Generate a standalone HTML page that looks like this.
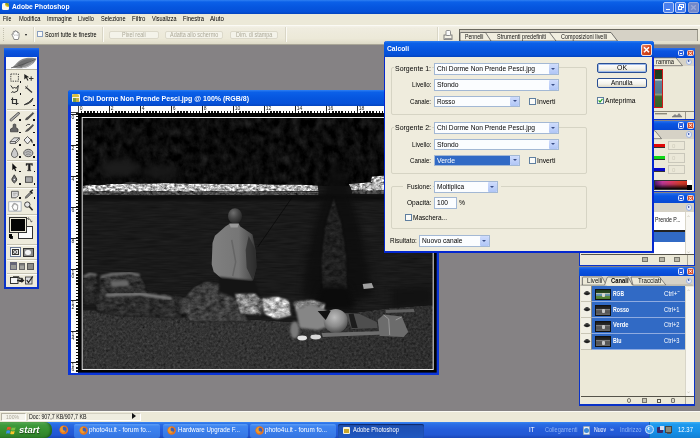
<!DOCTYPE html>
<html><head><meta charset="utf-8"><title>Adobe Photoshop</title>
<style>
*{box-sizing:border-box;margin:0;padding:0}
html,body{width:700px;height:438px;overflow:hidden;background:#858284;font-family:"Liberation Sans",sans-serif;font-size:6px;color:#000}
.a{position:absolute}
.t{position:absolute;white-space:nowrap;transform-origin:0 50%}
.xb{background:linear-gradient(#2f80f2 0%,#0b60e8 14%,#0656df 50%,#0550d8 85%,#0443bd 100%)}
.pb{background:linear-gradient(#2870ee 0%,#0a55e0 30%,#0648d4 100%)}
.dd{position:absolute;background:#fbfdff;border:1px solid #a3b8d4}
.ddb{position:absolute;right:0;top:0;bottom:0;width:9px;background:linear-gradient(#cfdcfc,#b0c6f6);border-radius:1px}
.ddb:after{content:"";position:absolute;left:2.5px;top:3.5px;border-left:2px solid transparent;border-right:2px solid transparent;border-top:2.5px solid #3a4f87}
.gb{position:absolute;border:1px solid #d6d4c4;border-radius:2px}
.cb{position:absolute;background:#fbfbf8;border:1px solid #5f7fa0}
.btn{position:absolute;border:1px solid #2a4f94;border-radius:2px;background:linear-gradient(#fff,#f3f2ea 60%,#dcd8c8)}
</style></head><body><div id="w" style="position:absolute;left:0;top:0;width:700px;height:438px;will-change:transform">
<div class="a xb" style="left:0;top:0;width:700px;height:14px"></div>
<div class="a" style="left:1.8px;top:3.2px;width:7.6px;height:6.6px;background:#fbf9ee;border-radius:1.5px"></div>
<div class="a" style="left:5px;top:2.8px;width:4.4px;height:4.6px;background:linear-gradient(215deg,#3a5a20 0,#8a9a20 35%,#e8c820 70%,#f4e8b0 100%);border-radius:1px 2px 1px 3px"></div>
<div class="t" style="left:12.20px;top:3.20px;font-size:7.8px;line-height:7.8px;color:#fff;transform:scaleX(0.856);font-weight:bold;">Adobe Photoshop</div>
<div class="a" style="left:662.5px;top:1.5px;width:11px;height:11px;background:#4a80ee;border:1px solid #b9cdf8;border-radius:2px"></div>
<div class="a" style="left:675px;top:1.5px;width:11px;height:11px;background:#4a80ee;border:1px solid #b9cdf8;border-radius:2px"></div>
<div class="a" style="left:688px;top:1.5px;width:11px;height:11px;background:#7289cc;border:1px solid #93a5d8;border-radius:2px"></div>
<div class="a" style="left:665.5px;top:8.5px;width:4px;height:1.6px;background:#fff;"></div>
<div class="a" style="left:679px;top:4px;width:4.5px;height:4px;border:1px solid #fff;border-top-width:1.5px"></div>
<div class="a" style="left:677.5px;top:6px;width:4.5px;height:4px;background:#4a80ee;border:1px solid #fff;border-top-width:1.5px"></div>
<svg class="a" style="left:688px;top:1.5px" width="11" height="11"><path d="M3.2 3.2L7.8 7.8M7.8 3.2L3.2 7.8" stroke="#9aa8d6" stroke-width="1.4"/></svg>
<div class="a" style="left:0px;top:14px;width:700px;height:11px;background:#ece9d8;"></div>
<div class="t" style="left:2.70px;top:15.30px;font-size:7px;line-height:7px;color:#000;transform:scaleX(0.736);">File</div>
<div class="t" style="left:18.50px;top:15.30px;font-size:7px;line-height:7px;color:#000;transform:scaleX(0.825);">Modifica</div>
<div class="t" style="left:46.50px;top:15.30px;font-size:7px;line-height:7px;color:#000;transform:scaleX(0.813);">Immagine</div>
<div class="t" style="left:78.00px;top:15.30px;font-size:7px;line-height:7px;color:#000;transform:scaleX(0.806);">Livello</div>
<div class="t" style="left:100.50px;top:15.30px;font-size:7px;line-height:7px;color:#000;transform:scaleX(0.797);">Selezione</div>
<div class="t" style="left:131.50px;top:15.30px;font-size:7px;line-height:7px;color:#000;transform:scaleX(0.868);">Filtro</div>
<div class="t" style="left:151.50px;top:15.30px;font-size:7px;line-height:7px;color:#000;transform:scaleX(0.781);">Visualizza</div>
<div class="t" style="left:182.50px;top:15.30px;font-size:7px;line-height:7px;color:#000;transform:scaleX(0.830);">Finestra</div>
<div class="t" style="left:210.00px;top:15.30px;font-size:7px;line-height:7px;color:#000;transform:scaleX(0.877);">Aiuto</div>
<div class="a" style="left:0px;top:25px;width:700px;height:19.5px;background:linear-gradient(#f4f2e8 0,#efecdf 12%,#ece9d8 70%,#dedac8 100%);border-top:1px solid #fbfaf5;border-bottom:0.500px solid #a8a596"></div>
<div class="a" style="left:3px;top:28px;width:1px;height:13px;border-left:1px dotted #c2bfae"></div>
<svg class="a" style="left:10px;top:29.500px" width="12" height="10.500" viewBox="0 0 12 10.500"><path d="M2.400 5.600C1.300 3.900 2.100 3.300 3.200 4.500V2.200c0-1.100 1.300-1.100 1.400 0V1.400c.2-1.100 1.500-1 1.500.1V1.900c.2-1 1.500-.9 1.500.2v1c.3-.9 1.500-.7 1.400.4C9 5.700 9.300 7.400 8.200 9.500H4.100C3.700 8.200 3 6.800 2.400 5.600Z" fill="#fff" stroke="#7c7c7c" stroke-width=".9"/><path d="M4.600 4.500V6M6.100 4.200V6M7.600 4.500V6" stroke="#b5b5b5" stroke-width=".7"/></svg>
<div class="a" style="left:25.4px;top:33.6px;width:0px;height:0px;border-left:1.9px solid transparent;border-right:1.9px solid transparent;border-top:2.3px solid #111"></div>
<div class="a" style="left:33px;top:27px;width:1px;height:15px;background:#d9d6c6;border-right:1px solid #fbfaf4;width:2px"></div>
<div class="a" style="left:37px;top:31px;width:5.9px;height:6.1px;background:#fbfbf8;border:0.800px solid #8a9fc0"></div>
<div class="t" style="left:44.60px;top:30.70px;font-size:7px;line-height:7px;color:#000;transform:scaleX(0.779);">Scorri tutte le finestre</div>
<div class="a" style="left:102px;top:27px;width:2px;height:15px;background:#d9d6c6;border-right:1px solid #fbfaf4"></div>
<div class="a" style="left:109px;top:31px;width:49.5px;height:7.5px;background:#f4f3ea;border:1px solid #dcd9ca;border-radius:2px"></div>
<div class="t" style="left:121.92px;top:31.30px;font-size:7px;line-height:7px;color:#aca998;transform:scaleX(0.780);">Pixel reali</div>
<div class="a" style="left:165px;top:31px;width:58px;height:7.5px;background:#f4f3ea;border:1px solid #dcd9ca;border-radius:2px"></div>
<div class="t" style="left:169.87px;top:31.30px;font-size:7px;line-height:7px;color:#aca998;transform:scaleX(0.780);">Adatta allo schermo</div>
<div class="a" style="left:230px;top:31px;width:48px;height:7.5px;background:#f4f3ea;border:1px solid #dcd9ca;border-radius:2px"></div>
<div class="t" style="left:235.79px;top:31.30px;font-size:7px;line-height:7px;color:#aca998;transform:scaleX(0.780);">Dim. di stampa</div>
<div class="a" style="left:285px;top:27px;width:2px;height:15px;background:#d9d6c6;border-right:1px solid #fbfaf4"></div>
<div class="a" style="left:437px;top:27px;width:2px;height:15px;background:#d9d6c6;border-right:1px solid #fbfaf4"></div>
<svg class="a" style="left:443px;top:29px" width="11" height="12" viewBox="0 0 11 12"><rect x="1" y="6" width="8" height="4.500" fill="#f4f2e6" stroke="#666" stroke-width=".8"/><rect x="3" y="1.500" width="4.500" height="5" rx="1" fill="#fafafa" stroke="#777" stroke-width=".8"/><rect x="1.500" y="9" width="7.500" height="1.500" fill="#999"/></svg>
<div class="a" style="left:459px;top:28.5px;width:238.5px;height:12.5px;background:#d6d2c6;border:1px solid #6b695f;border-right-color:#9a978a;border-bottom:none"></div>
<svg class="a" style="left:459px;top:28px" width="240" height="14" viewBox="0 0 240 14">
<path d="M90 4.500H152L158.500 13H90Z" fill="#f1eee0" stroke="#444" stroke-width=".7"/>
<path d="M24 4.500H90.500L97 13H24Z" fill="#f1eee0" stroke="#444" stroke-width=".7"/>
<path d="M1 13V5.500Q1 4.500 2 4.500H26.500L32 13Z" fill="#f1eee0" stroke="#444" stroke-width=".7"/>
</svg>
<div class="t" style="left:464.50px;top:34.05px;font-size:6.5px;line-height:6.5px;color:#111;transform:scaleX(0.800);">Pennelli</div>
<div class="t" style="left:497.00px;top:34.05px;font-size:6.5px;line-height:6.5px;color:#111;transform:scaleX(0.848);">Strumenti predefiniti</div>
<div class="t" style="left:561.00px;top:34.05px;font-size:6.5px;line-height:6.5px;color:#111;transform:scaleX(0.838);">Composizioni livelli</div>
<div class="a" style="left:3.9px;top:48px;width:35.6px;height:241.3px;background:#eeebdc;border:1px solid #0a32c8;border-width:1px 2.1px 2px 2.1px"></div>
<div class="a pb" style="left:3.900px;top:48px;width:35.600px;height:9.400px"></div>
<div class="a" style="left:6px;top:57.4px;width:31.4px;height:12.6px;background:#fbfbfb;border-bottom:1px solid #b5b2a2"></div>
<svg class="a" style="left:5px;top:57px" width="33" height="13" viewBox="5 57 33 13">
<defs><filter id="fb" color-interpolation-filters="sRGB" x="-10%" y="-20%" width="120%" height="140%"><feGaussianBlur stdDeviation=".6"/></filter></defs>
<g filter="url(#fb)">
<path d="M12 67.500C15 66 17 61 22.500 59C27 57.500 33 57.500 36.500 58.800C35 61.500 33 65 27 67.200C22 68.800 16 68.500 12 67.500Z" fill="#8a8a8a"/>
<path d="M17 65C20 60.500 26 58.800 33 59.500C29 61 24 64.500 21.500 67.500Z" fill="#6e6e6e"/>
<path d="M11 67.800C17 66.500 25 64 35.500 59.200" stroke="#4a4a4a" stroke-width=".7" fill="none"/>
<path d="M22 67.800C26 67.500 30 65.500 32.500 63" stroke="#bdbdbd" stroke-width="1" fill="none"/>
</g></svg>
<div class="a" style="left:7px;top:108.5px;width:30px;height:1px;background:#c5c2b2;border-bottom:1px solid #fbfaf5;height:2px"></div>
<div class="a" style="left:7px;top:159.5px;width:30px;height:1px;background:#c5c2b2;border-bottom:1px solid #fbfaf5;height:2px"></div>
<div class="a" style="left:7px;top:186.5px;width:30px;height:1px;background:#c5c2b2;border-bottom:1px solid #fbfaf5;height:2px"></div>
<div class="a" style="left:7px;top:213.5px;width:30px;height:1px;background:#c5c2b2;border-bottom:1px solid #fbfaf5;height:2px"></div>
<div class="a" style="left:7px;top:243.5px;width:30px;height:1px;background:#c5c2b2;border-bottom:1px solid #fbfaf5;height:2px"></div>
<div class="a" style="left:7px;top:259px;width:30px;height:1px;background:#c5c2b2;border-bottom:1px solid #fbfaf5;height:2px"></div>
<div class="a" style="left:7px;top:272.5px;width:30px;height:1px;background:#c5c2b2;border-bottom:1px solid #fbfaf5;height:2px"></div>
<div class="a" style="left:68px;top:89.5px;width:371.3px;height:285.2px;background:#0a35d8;border-radius:3px 3px 0 0"></div>
<div class="a xb" style="left:68px;top:89.500px;width:371.300px;height:16px;border-radius:3px 3px 0 0"></div>
<div class="a" style="left:71.5px;top:94px;width:8px;height:8px;background:#f7f5e0;border-radius:1px"></div>
<div class="a" style="left:72px;top:94px;width:7px;height:2.5px;background:#d8c040;border-radius:2px 2px 0 0"></div>
<div class="a" style="left:75.5px;top:97.5px;width:3.5px;height:4px;background:#c8b040;"></div>
<div class="a" style="left:73px;top:98px;width:2.5px;height:3.5px;background:#7aa040;"></div>
<div class="t" style="left:82.50px;top:94.65px;font-size:7.5px;line-height:7.5px;color:#fff;transform:scaleX(0.934);font-weight:bold;">Chi Dorme Non Prende Pesci.jpg @ 100% (RGB/8)</div>
<div class="a" style="left:70.9px;top:105.5px;width:366.4px;height:7.5px;background:#fdfdfd;"></div>
<div class="a" style="left:70.9px;top:105.5px;width:7.4px;height:267px;background:#fdfdfd;"></div>
<div class="a" style="left:78.3px;top:110.5px;width:359px;height:2.5px;background:repeating-linear-gradient(90deg,#111 0,#111 1.4px,transparent 1.4px,transparent 3.1px)"></div>
<div class="a" style="left:75.8px;top:113px;width:2.5px;height:259.5px;background:repeating-linear-gradient(180deg,#111 0,#111 1.4px,transparent 1.4px,transparent 3.1px)"></div>
<div class="a" style="left:78.2px;top:106px;width:1px;height:6.5px;background:#222;"></div>
<div class="t" style="left:79.70px;top:106.20px;font-size:5px;line-height:5px;color:#222;">0</div>
<div class="a" style="left:109.2px;top:106px;width:1px;height:6.5px;background:#222;"></div>
<div class="t" style="left:110.70px;top:106.20px;font-size:5px;line-height:5px;color:#222;">2</div>
<div class="a" style="left:140.2px;top:106px;width:1px;height:6.5px;background:#222;"></div>
<div class="t" style="left:141.70px;top:106.20px;font-size:5px;line-height:5px;color:#222;">4</div>
<div class="a" style="left:171.2px;top:106px;width:1px;height:6.5px;background:#222;"></div>
<div class="t" style="left:172.70px;top:106.20px;font-size:5px;line-height:5px;color:#222;">6</div>
<div class="a" style="left:202.2px;top:106px;width:1px;height:6.5px;background:#222;"></div>
<div class="t" style="left:203.70px;top:106.20px;font-size:5px;line-height:5px;color:#222;">8</div>
<div class="a" style="left:233.2px;top:106px;width:1px;height:6.5px;background:#222;"></div>
<div class="t" style="left:234.70px;top:106.20px;font-size:5px;line-height:5px;color:#222;">10</div>
<div class="a" style="left:264.2px;top:106px;width:1px;height:6.5px;background:#222;"></div>
<div class="t" style="left:265.70px;top:106.20px;font-size:5px;line-height:5px;color:#222;">12</div>
<div class="a" style="left:295.2px;top:106px;width:1px;height:6.5px;background:#222;"></div>
<div class="t" style="left:296.70px;top:106.20px;font-size:5px;line-height:5px;color:#222;">14</div>
<div class="a" style="left:326.2px;top:106px;width:1px;height:6.5px;background:#222;"></div>
<div class="t" style="left:327.70px;top:106.20px;font-size:5px;line-height:5px;color:#222;">16</div>
<div class="a" style="left:357.2px;top:106px;width:1px;height:6.5px;background:#222;"></div>
<div class="t" style="left:358.70px;top:106.20px;font-size:5px;line-height:5px;color:#222;">18</div>
<div class="a" style="left:71px;top:113.5px;width:7px;height:1px;background:#222;"></div>
<div class="t" style="left:71.50px;top:114.70px;font-size:5px;line-height:5px;color:#222;">0</div>
<div class="a" style="left:71px;top:144.5px;width:7px;height:1px;background:#222;"></div>
<div class="t" style="left:71.50px;top:145.70px;font-size:5px;line-height:5px;color:#222;">2</div>
<div class="a" style="left:71px;top:175.5px;width:7px;height:1px;background:#222;"></div>
<div class="t" style="left:71.50px;top:176.70px;font-size:5px;line-height:5px;color:#222;">4</div>
<div class="a" style="left:71px;top:206.5px;width:7px;height:1px;background:#222;"></div>
<div class="t" style="left:71.50px;top:207.70px;font-size:5px;line-height:5px;color:#222;">6</div>
<div class="a" style="left:71px;top:237.5px;width:7px;height:1px;background:#222;"></div>
<div class="t" style="left:71.50px;top:238.70px;font-size:5px;line-height:5px;color:#222;">8</div>
<div class="a" style="left:71px;top:268.5px;width:7px;height:1px;background:#222;"></div>
<div class="t" style="left:71.50px;top:269.70px;font-size:5px;line-height:5px;color:#222;">1</div>
<div class="t" style="left:71.50px;top:273.90px;font-size:5px;line-height:5px;color:#222;">0</div>
<div class="a" style="left:71px;top:299.5px;width:7px;height:1px;background:#222;"></div>
<div class="t" style="left:71.50px;top:300.70px;font-size:5px;line-height:5px;color:#222;">1</div>
<div class="t" style="left:71.50px;top:304.90px;font-size:5px;line-height:5px;color:#222;">2</div>
<div class="a" style="left:71px;top:330.5px;width:7px;height:1px;background:#222;"></div>
<div class="t" style="left:71.50px;top:331.70px;font-size:5px;line-height:5px;color:#222;">1</div>
<div class="t" style="left:71.50px;top:335.90px;font-size:5px;line-height:5px;color:#222;">4</div>
<div class="a" style="left:71px;top:361.5px;width:7px;height:1px;background:#222;"></div>
<div class="t" style="left:71.50px;top:362.70px;font-size:5px;line-height:5px;color:#222;">1</div>
<div class="t" style="left:71.50px;top:366.90px;font-size:5px;line-height:5px;color:#222;">6</div>
<div class="a" style="left:70.9px;top:112.3px;width:7.4px;height:0.8px;background:#444;"></div>
<div class="a" style="left:77.6px;top:105.5px;width:0.8px;height:7.5px;background:#444;"></div>
<svg class="a" style="left:78.300px;top:113px" width="358.700" height="259.600" viewBox="78.300 113 358.700 259.600">
<defs>
<filter id="gr" x="0" y="0" width="100%" height="100%" color-interpolation-filters="sRGB">
 <feTurbulence type="fractalNoise" baseFrequency="0.42" numOctaves="3" seed="7" result="n"/>
 <feColorMatrix in="n" type="matrix" values=".34 .33 .33 0 0 .34 .33 .33 0 0 .34 .33 .33 0 0 0 0 0 0 1" result="g"/>
 <feComposite in="SourceGraphic" in2="g" operator="arithmetic" k1="1.800" k2="0.100" k3="0" k4="0" result="m"/>
 <feComposite in="m" in2="SourceGraphic" operator="in"/>
</filter>
<filter id="gw" x="0" y="0" width="100%" height="100%" color-interpolation-filters="sRGB">
 <feTurbulence type="fractalNoise" baseFrequency="0.05 0.55" numOctaves="2" seed="5" result="n"/>
 <feColorMatrix in="n" type="matrix" values=".34 .33 .33 0 0 .34 .33 .33 0 0 .34 .33 .33 0 0 0 0 0 0 1" result="g"/>
 <feComposite in="SourceGraphic" in2="g" operator="arithmetic" k1="1.200" k2="0.400" k3="0" k4="0" result="m"/>
 <feComposite in="m" in2="SourceGraphic" operator="in"/>
</filter>
<filter id="tr" x="0" y="0" width="100%" height="100%" color-interpolation-filters="sRGB">
 <feTurbulence type="fractalNoise" baseFrequency="0.13 0.11" numOctaves="4" seed="23" result="n"/>
 <feColorMatrix in="n" type="matrix" values=".34 .33 .33 0 0 .34 .33 .33 0 0 .34 .33 .33 0 0 0 0 0 0 1" result="g"/>
 <feComposite in="SourceGraphic" in2="g" operator="arithmetic" k1="0" k2="1" k3="0.340" k4="-0.165" result="m"/>
 <feComposite in="m" in2="SourceGraphic" operator="in"/>
</filter>
<filter id="gr2" x="-5%" y="-5%" width="110%" height="110%" color-interpolation-filters="sRGB">
 <feTurbulence type="fractalNoise" baseFrequency="0.16 0.22" numOctaves="3" seed="11" result="n"/>
 <feColorMatrix in="n" type="matrix" values=".34 .33 .33 0 0 .34 .33 .33 0 0 .34 .33 .33 0 0 0 0 0 0 1" result="g"/>
 <feGaussianBlur in="SourceGraphic" stdDeviation="1.100" result="b"/>
 <feComposite in="b" in2="g" operator="arithmetic" k1="2.600" k2="-0.300" k3="0" k4="0" result="m"/>
 <feComposite in="m" in2="b" operator="in"/>
</filter>
<filter id="bd" x="0" y="-20%" width="100%" height="140%" color-interpolation-filters="sRGB">
 <feTurbulence type="fractalNoise" baseFrequency="0.28 0.45" numOctaves="3" seed="3" result="n"/>
 <feColorMatrix in="n" type="matrix" values=".34 .33 .33 0 0 .34 .33 .33 0 0 .34 .33 .33 0 0 0 0 0 0 1" result="g"/>
 <feGaussianBlur in="SourceGraphic" stdDeviation="0.600" result="b"/>
 <feComposite in="b" in2="g" operator="arithmetic" k1="3.200" k2="-0.650" k3="0" k4="0" result="m"/>
 <feComposite in="m" in2="b" operator="in"/>
</filter>
<filter id="bl" color-interpolation-filters="sRGB" x="-10%" y="-10%" width="120%" height="120%"><feGaussianBlur stdDeviation="0.700"/></filter>
<filter id="bl1" color-interpolation-filters="sRGB" x="-20%" y="-20%" width="140%" height="140%"><feGaussianBlur stdDeviation="1.300"/></filter>
<filter id="bl2" color-interpolation-filters="sRGB" x="-30%" y="-30%" width="160%" height="160%"><feGaussianBlur stdDeviation="3"/></filter>
<linearGradient id="shirt" x1="0" y1="0" x2="1" y2="0"><stop offset="0" stop-color="#808080"/><stop offset=".6" stop-color="#767676"/><stop offset=".85" stop-color="#545454"/><stop offset="1" stop-color="#2c2c2c"/></linearGradient>
<radialGradient id="hip" cx=".45" cy=".35" r=".7"><stop offset="0" stop-color="#bcbcbc"/><stop offset=".55" stop-color="#8a8a8a"/><stop offset="1" stop-color="#404040"/></radialGradient>
<radialGradient id="head" cx=".38" cy=".3" r=".75"><stop offset="0" stop-color="#6e6e6e"/><stop offset=".5" stop-color="#444"/><stop offset="1" stop-color="#222"/></radialGradient>
<linearGradient id="grs" gradientUnits="userSpaceOnUse" x1="83" y1="0" x2="434" y2="0"><stop offset="0" stop-color="#333"/><stop offset=".45" stop-color="#343434"/><stop offset=".75" stop-color="#303030"/><stop offset="1" stop-color="#2e2e2e"/></linearGradient>
<clipPath id="pc"><rect x="83" y="118" width="350.300" height="251.300"/></clipPath>
</defs>
<rect x="78.300" y="113" width="358.700" height="259.600" fill="#020202"/>
<g clip-path="url(#pc)">
 <!-- trees -->
 <rect x="83" y="118" width="351" height="68" fill="#0a0a0a" filter="url(#tr)"/>
 <g filter="url(#bl2)">
  <ellipse cx="120" cy="168" rx="20" ry="9" fill="#1c1c1c"/>
  <ellipse cx="160" cy="172" rx="18" ry="7" fill="#181818"/>
  <ellipse cx="410" cy="140" rx="28" ry="20" fill="#202020"/>
 </g>
 <path d="M122 184Q131 179.500 141 184Z" fill="#333" filter="url(#bl)"/>
 <!-- water -->
 <rect x="83" y="186" width="351" height="140" fill="#1a1a1a" filter="url(#gw)"/>
 <rect x="83" y="194.500" width="351" height="6" fill="#0a0a0a" opacity=".75" filter="url(#bl1)"/>
 <!-- stone band -->
 <g filter="url(#bd)">
  <path d="M83 186L90 184.500L100 185L112 184L124 184L140 183.500L148 183.500L165 183L185 183.500L205 183.500L228 184L250 184L275 184.500L300 184.500L318 185.500L319 191L300 191.500L270 191.500L240 192L215 191.500L185 192L160 191.500L130 192L105 191.500L83 192Z" fill="#c2c2c2"/>
  <path d="M349 184L360 183L371 182L372 176.500L382 175.500L400 175L434 173V189L400 190L370 191L352 190.500Z" fill="#bebebe"/>
 </g>
 <g filter="url(#bd)" opacity=".8">
  <path d="M83 191.500H319V195L250 195.500L200 195L150 195.500L83 195Z" fill="#5a5a5a"/>
  <path d="M352 190.500H434V194H352Z" fill="#555"/>
 </g>
 <!-- bush -->
 <path d="M335 156L343 172L350 192L357 215L364 245L370 275L372 296L345 304L320 304L302 296L305 270L311 240L318 214L324 192L329 172Z" fill="#0d0d0d" opacity=".8" filter="url(#bl2)"/>
 <g filter="url(#gr2)" opacity=".75">
  <path d="M334 196L342 222L347 255L348 290L322 290L321 258L325 225Z" fill="#262626"/>
 </g>
 <path d="M322 286L348 286L356 310L314 310Z" fill="#0b0b0b" filter="url(#bl2)"/>
 <path d="M392 288L432 287V306L392 308Z" fill="#121212" filter="url(#bl2)"/>
 <path d="M363 284L372 283L374 288L364 289Z" fill="#a0a0a0" filter="url(#bl)"/>
 <!-- fishing rod -->
 <path d="M258 247L292 198" stroke="#070707" stroke-width=".9" fill="none" opacity=".8"/>
 <!-- grass -->
 <path d="M83 310L130 311L185 314L230 318L290 322L330 318L360 312L390 308L434 305V370H83Z" fill="url(#grs)" filter="url(#gr)"/>
 <path d="M386 310L414 309L415 312L386 313Z" fill="#606060" filter="url(#bl)"/>
 <!-- rocks left -->
 <g filter="url(#gr2)">
  <path d="M83 277L90 273L97 274L99 290L98 304L83 306Z" fill="#2a2a2a"/>
  <path d="M99 277L112 273L130 272L140 274L146 284L147 293L100 293Z" fill="#313131"/>
  <path d="M96 293L150 291L182 296L196 300L210 314L180 318L120 316L96 312Z" fill="#2d2d2d"/>
  <path d="M181 302L192 288L205 281L220 282L232 290L240 302L250 322L190 322Z" fill="#3e3e3e"/>
 </g>
 <path d="M84 277L90 274L97 275M101 277L112 274L130 273L140 275" stroke="#858585" stroke-width="2.200" fill="none" filter="url(#bl1)"/>
 <path d="M106 295L140 294L172 298.500" stroke="#8a8a8a" stroke-width="2.600" fill="none" filter="url(#bl1)"/>
 <path d="M110 281L128 280L130 286L112 287Z" fill="#686868" filter="url(#bl1)"/>
 <!-- man -->
 <ellipse cx="235.300" cy="216" rx="7" ry="7.800" fill="url(#head)" filter="url(#bl)"/>
 <path d="M229.600 224L239.200 224L240.400 226.200L252.800 234.600L256 250L257 267L253.500 280L252.400 281.300L222.400 279L214 271.700L212 264.500L212.800 243L215.200 235.800L226 226.200Z" fill="url(#shirt)" filter="url(#bl)"/>
 <path d="M229.600 223.500L239.200 223.500L238 227.500L231 227.500Z" fill="#9a9a9a" filter="url(#bl)"/>
 <path d="M249 236L255 248L257 267L253 280L247 268L246 250Z" fill="#2a2a2a" opacity=".7" filter="url(#bl)"/>
 <path d="M232 240L236 262L233 276" stroke="#5a5a5a" stroke-width="1.500" fill="none" opacity=".6" filter="url(#bl)"/>
 <path d="M219 277L255 281L261 296L240 300L219 292Z" fill="#141414" filter="url(#bl1)"/>
 <!-- light rocks near woman -->
 <g filter="url(#gr2)">
  <path d="M262 298L278 296L290 300L292 316L276 320L264 314Z" fill="#b4b4b4"/>
  <path d="M292 301L312 299L326 303L325 311L296 312Z" fill="#7e7e7e"/>
  <path d="M234 293L256 293L262 300L262 316L240 314Z" fill="#8a8a8a"/>
 </g>
 <!-- woman -->
 <path d="M296 309L312 305L326 310L330 326L318 330L300 328Z" fill="#868686" filter="url(#bl1)"/>
 <path d="M345 313L360 314L377 322L378 328L352 329Z" fill="#4e4e4e" filter="url(#bl)"/>
 <circle cx="336" cy="321" r="12" fill="url(#hip)" filter="url(#bl)"/>
 <path d="M318 311L331 311L326 320Z" fill="#111" filter="url(#bl)"/>
 <path d="M349 314L354 314L358 328L352 328Z" fill="#1c1c1c" filter="url(#bl)"/>
 <ellipse cx="295" cy="330" rx="4.500" ry="8.500" fill="#7a7a7a" filter="url(#bl1)"/>
 <ellipse cx="302.500" cy="338" rx="4.800" ry="2.400" fill="#e2e2e2" filter="url(#bl)"/>
 <ellipse cx="316" cy="337" rx="5.300" ry="2.400" fill="#d8d8d8" filter="url(#bl)"/>
 <path d="M322 333L384 331L385 334.500L323 337Z" fill="#6e6e6e" filter="url(#bl)"/>
 <!-- bag -->
 <path d="M378 320L384 314.500L402 316.500L408.500 332L404 337L380 336Z" fill="#6c6c6c" filter="url(#bl)"/>
 <path d="M384 315L389 319L390 335M402 317L396 320" stroke="#999" stroke-width="1" fill="none" filter="url(#bl)"/>
</g>
<rect x="82.500" y="117.500" width="351" height="252" fill="none" stroke="#ececec" stroke-width="1"/>
</svg>

<div class="a" style="left:579px;top:48px;width:116px;height:72px;background:#ece9d8;border:1.500px solid #0a32c8"></div>
<div class="a pb" style="left:579px;top:48px;width:116px;height:9.500px"></div>
<div class="a" style="left:677.5px;top:49.8px;width:6.5px;height:6.5px;background:#2f62e0;border:1px solid #dfe7fb;border-radius:1.5px"></div>
<div class="a" style="left:679.5px;top:53.3px;width:2.5px;height:1.2px;background:#fff;"></div>
<div class="a" style="left:686.5px;top:49.8px;width:7px;height:6.5px;background:#d8502c;border:1px solid #f3d5c8;border-radius:1.5px"></div>
<svg class="a" style="left:686.5px;top:49.8px" width="7" height="6.500"><path d="M2.200 2L4.800 4.500M4.800 2L2.200 4.500" stroke="#fff" stroke-width="1"/></svg>
<div class="a" style="left:580.5px;top:57.5px;width:113px;height:8.5px;background:#d6d2c6;"></div>
<svg class="a" style="left:650px;top:57px" width="44" height="10" viewBox="650 57 44 10"><path d="M650 57.800H676L682.500 65.700H650Z" fill="#ece9d8" stroke="#444" stroke-width=".6"/></svg>
<div class="t" style="left:655.50px;top:58.55px;font-size:6.5px;line-height:6.5px;color:#111;transform:scaleX(0.890);">ramma</div>
<div class="a" style="left:685.5px;top:58.5px;width:6.5px;height:6.5px;background:#e8eefc;border-radius:3.2px;border:0.5px solid #9fb4e0"></div>
<div class="a" style="left:687.8px;top:60.1px;width:0px;height:0px;border-top:1.7px solid transparent;border-bottom:1.7px solid transparent;border-left:2.4px solid #1c3a9a"></div>
<div class="a" style="left:654px;top:69px;width:9px;height:39px;background:#5a7f8a;border:1px solid #d01818;background:linear-gradient(#1f3a1d 0%,#22401f 24%,#e8e8e8 26%,#5e8496 30%,#56788a 62%,#8a9a80 66%,#3e6a30 72%,#356028 100%)"></div>
<div class="a" style="left:654px;top:111px;width:39.5px;height:7.5px;background:#ece9d8;border-top:1px solid #8a8778"></div>
<div class="a" style="left:655px;top:113px;width:12px;height:2px;background:#c5c2b2;border-top:1px solid #8a8778"></div>
<svg class="a" style="left:671px;top:112px" width="12" height="6"><path d="M1 5L4 2.500L6 4L8 1.500L11 5Z" fill="#888" stroke="#555" stroke-width=".4"/></svg>
<div class="a" style="left:684.5px;top:111.5px;width:0.8px;height:7px;background:#9a978a;"></div>
<div class="a" style="left:579px;top:120.5px;width:116px;height:71.5px;background:#ece9d8;border:1.500px solid #0a32c8"></div>
<div class="a pb" style="left:579px;top:120.5px;width:116px;height:9.500px"></div>
<div class="a" style="left:677.5px;top:122.3px;width:6.5px;height:6.5px;background:#2f62e0;border:1px solid #dfe7fb;border-radius:1.5px"></div>
<div class="a" style="left:679.5px;top:125.8px;width:2.5px;height:1.2px;background:#fff;"></div>
<div class="a" style="left:686.5px;top:122.3px;width:7px;height:6.5px;background:#d8502c;border:1px solid #f3d5c8;border-radius:1.5px"></div>
<svg class="a" style="left:686.5px;top:122.3px" width="7" height="6.500"><path d="M2.200 2L4.800 4.500M4.800 2L2.200 4.500" stroke="#fff" stroke-width="1"/></svg>
<div class="a" style="left:580.5px;top:130px;width:113px;height:8.5px;background:#d6d2c6;"></div>
<svg class="a" style="left:650px;top:129.500px" width="44" height="10" viewBox="650 129.500 44 10"><path d="M650 130.300H655L661.500 138.200H650Z" fill="#ece9d8" stroke="#444" stroke-width=".6"/></svg>
<div class="a" style="left:685.5px;top:131px;width:6.5px;height:6.5px;background:#e8eefc;border-radius:3.2px;border:0.5px solid #9fb4e0"></div>
<div class="a" style="left:687.8px;top:132.6px;width:0px;height:0px;border-top:1.7px solid transparent;border-bottom:1.7px solid transparent;border-left:2.4px solid #1c3a9a"></div>
<div class="a" style="left:654px;top:144.3px;width:10.7px;height:3.6px;background:#e00808;border-bottom:0.700px solid #333"></div>
<div class="a" style="left:667.5px;top:140.70000000000002px;width:17.5px;height:9.8px;background:#ebe8d8;border:1px solid #c9c7ba"></div>
<div class="t" style="left:672.00px;top:142.90px;font-size:6px;line-height:6px;color:#cfccbc;">0</div>
<div class="a" style="left:654px;top:156.4px;width:10.7px;height:3.6px;background:#10d818;border-bottom:0.700px solid #333"></div>
<div class="a" style="left:667.5px;top:152.8px;width:17.5px;height:9.8px;background:#ebe8d8;border:1px solid #c9c7ba"></div>
<div class="t" style="left:672.00px;top:155.00px;font-size:6px;line-height:6px;color:#cfccbc;">0</div>
<div class="a" style="left:654px;top:168.3px;width:10.7px;height:3.6px;background:#0808c8;border-bottom:0.700px solid #333"></div>
<div class="a" style="left:667.5px;top:164.70000000000002px;width:17.5px;height:9.8px;background:#ebe8d8;border:1px solid #c9c7ba"></div>
<div class="t" style="left:672.00px;top:166.90px;font-size:6px;line-height:6px;color:#cfccbc;">0</div>
<div class="a" style="left:654px;top:180.3px;width:37.5px;height:10px;background:linear-gradient(180deg,rgba(0,0,0,0) 0%,rgba(0,0,0,.15) 40%,#000 100%),linear-gradient(90deg,#5a1a7a 0%,#c83ca0 20%,#e03a6a 45%,#e04030 70%,#d83020 100%);border:0.5px solid #333"></div>
<div class="a" style="left:686.5px;top:180.3px;width:5px;height:5px;background:#fff;"></div>
<div class="a" style="left:686.5px;top:185.3px;width:5px;height:5px;background:#000;"></div>
<div class="a" style="left:579px;top:193px;width:116px;height:73px;background:#ece9d8;border:1.500px solid #0a32c8"></div>
<div class="a pb" style="left:579px;top:193px;width:116px;height:9.500px"></div>
<div class="a" style="left:677.5px;top:194.8px;width:6.5px;height:6.5px;background:#2f62e0;border:1px solid #dfe7fb;border-radius:1.5px"></div>
<div class="a" style="left:679.5px;top:198.3px;width:2.5px;height:1.2px;background:#fff;"></div>
<div class="a" style="left:686.5px;top:194.8px;width:7px;height:6.5px;background:#d8502c;border:1px solid #f3d5c8;border-radius:1.5px"></div>
<svg class="a" style="left:686.5px;top:194.8px" width="7" height="6.500"><path d="M2.200 2L4.800 4.500M4.800 2L2.200 4.500" stroke="#fff" stroke-width="1"/></svg>
<div class="a" style="left:580.5px;top:202.5px;width:113px;height:9.5px;background:#d6d2c6;"></div>
<div class="a" style="left:685.5px;top:204px;width:6.5px;height:6.5px;background:#e8eefc;border-radius:3.2px;border:0.5px solid #9fb4e0"></div>
<div class="a" style="left:687.8px;top:205.6px;width:0px;height:0px;border-top:1.7px solid transparent;border-bottom:1.7px solid transparent;border-left:2.4px solid #1c3a9a"></div>
<div class="a" style="left:654px;top:212px;width:31px;height:41.5px;background:#fff;"></div>
<div class="t" style="left:654.60px;top:217.15px;font-size:6.5px;line-height:6.5px;color:#111;transform:scaleX(0.805);">Prende P...</div>
<div class="a" style="left:654px;top:230.3px;width:31px;height:1.4px;background:#222;"></div>
<div class="a" style="left:654px;top:231.7px;width:31px;height:10px;background:#316ac5;"></div>
<div class="a" style="left:685px;top:212px;width:8.5px;height:41.5px;background:#f8f7f2;border-left:1px solid #d8d5c8"></div>
<div class="t" style="left:686.30px;top:215.00px;font-size:6px;line-height:6px;color:#c8c5b8;">⌃</div>
<div class="t" style="left:686.30px;top:247.50px;font-size:6px;line-height:6px;color:#c8c5b8;">⌄</div>
<div class="a" style="left:580.5px;top:253.5px;width:113px;height:1px;background:#55534a;"></div>
<div class="a" style="left:580.5px;top:254.5px;width:113px;height:10px;background:#ece9d8;"></div>
<div class="a" style="left:641.5px;top:256.5px;width:6px;height:5.5px;background:#b8b6a8;border:1px solid #77756a"></div>
<div class="a" style="left:658.5px;top:256.5px;width:6px;height:5.5px;background:#b8b6a8;border:1px solid #77756a"></div>
<div class="a" style="left:674px;top:256.5px;width:6px;height:5.5px;background:#b8b6a8;border:1px solid #77756a"></div>
<div class="a" style="left:686.5px;top:254.5px;width:0.8px;height:10px;background:#aaa798;"></div>
<div class="a" style="left:579px;top:266.5px;width:116px;height:139.5px;background:#ece9d8;border:1.500px solid #0a32c8;border-bottom-width:2px"></div>
<div class="a pb" style="left:579px;top:266.5px;width:116px;height:9.500px"></div>
<div class="a" style="left:677.5px;top:268.3px;width:6.5px;height:6.5px;background:#2f62e0;border:1px solid #dfe7fb;border-radius:1.5px"></div>
<div class="a" style="left:679.5px;top:271.8px;width:2.5px;height:1.2px;background:#fff;"></div>
<div class="a" style="left:686.5px;top:268.3px;width:7px;height:6.5px;background:#d8502c;border:1px solid #f3d5c8;border-radius:1.5px"></div>
<svg class="a" style="left:686.5px;top:268.3px" width="7" height="6.500"><path d="M2.200 2L4.800 4.500M4.800 2L2.200 4.500" stroke="#fff" stroke-width="1"/></svg>
<div class="a" style="left:580.5px;top:276px;width:113px;height:9.5px;background:#d6d2c6;"></div>
<svg class="a" style="left:579px;top:275px" width="115" height="12" viewBox="579 275 115 12">
<path d="M631 277H659.500L666 285.300H633Z" fill="#ece9d8" stroke="#444" stroke-width=".6"/>
<path d="M582.500 285.300V278Q582.500 277 583.500 277H602L606.500 285.300Z" fill="#ece9d8" stroke="#444" stroke-width=".6"/>
<path d="M580.500 285.300H604.500L607 278Q607.300 277 608.300 277H628L632.500 285.300H692.500" fill="#ece9d8" stroke="#444" stroke-width=".6"/>
<rect x="580.500" y="285.500" width="112" height="1.500" fill="#ece9d8"/>
</svg>
<div class="t" style="left:586.50px;top:278.35px;font-size:6.5px;line-height:6.5px;color:#111;transform:scaleX(0.953);">Livelli</div>
<div class="t" style="left:611.00px;top:278.35px;font-size:6.5px;line-height:6.5px;color:#000;transform:scaleX(0.897);font-weight:bold;">Canali</div>
<div class="t" style="left:637.50px;top:278.35px;font-size:6.5px;line-height:6.5px;color:#111;transform:scaleX(0.946);">Tracciati</div>
<div class="a" style="left:685.5px;top:277.5px;width:6.5px;height:6.5px;background:#e8eefc;border-radius:3.2px;border:0.5px solid #9fb4e0"></div>
<div class="a" style="left:687.8px;top:279.1px;width:0px;height:0px;border-top:1.7px solid transparent;border-bottom:1.7px solid transparent;border-left:2.4px solid #1c3a9a"></div>
<div class="a" style="left:580.5px;top:286.4px;width:11.5px;height:15.9px;background:#f1efe4;border-right:1px solid #8d8a7c;border-bottom:1.2px solid #c9c6b6"></div>
<svg class="a" style="left:582.500px;top:290.9px" width="8" height="6"><path d="M.5 2.800Q4 -.8 7.500 2.800Q4 5.500 .5 2.800Z" fill="#222"/><path d="M1.500 1.500Q4 -.5 6.500 1.500" stroke="#222" stroke-width="1" fill="none"/></svg>
<div class="a" style="left:592px;top:286.4px;width:93px;height:15.9px;background:#316ac5;border-bottom:1.300px solid #8fabe0"></div>
<div class="a" style="left:594.5px;top:288.7px;width:16.5px;height:11px;background:linear-gradient(#1e3a1c 0%,#2a4a22 34%,#cfd6cf 40%,#6a98b0 48%,#5c88a0 64%,#5c8a3c 72%,#4a7a30 100%);border:0.500px solid #111"></div>
<div class="a" style="left:601.5px;top:292.9px;width:3px;height:4.5px;background:#d8d8d0;border-radius:1px"></div>
<div class="t" style="left:613.00px;top:290.65px;font-size:6.5px;line-height:6.5px;color:#fff;transform:scaleX(0.762);font-weight:bold;">RGB</div>
<div class="t" style="left:664.00px;top:290.65px;font-size:6.5px;line-height:6.5px;color:#fff;transform:scaleX(0.965);">Ctrl+˜</div>
<div class="a" style="left:580.5px;top:302.3px;width:11.5px;height:15.9px;background:#f1efe4;border-right:1px solid #8d8a7c;border-bottom:1.2px solid #c9c6b6"></div>
<svg class="a" style="left:582.500px;top:306.8px" width="8" height="6"><path d="M.5 2.800Q4 -.8 7.500 2.800Q4 5.500 .5 2.800Z" fill="#222"/><path d="M1.500 1.500Q4 -.5 6.500 1.500" stroke="#222" stroke-width="1" fill="none"/></svg>
<div class="a" style="left:592px;top:302.3px;width:93px;height:15.9px;background:#316ac5;border-bottom:1.300px solid #8fabe0"></div>
<div class="a" style="left:594.5px;top:304.6px;width:16.5px;height:11px;background:linear-gradient(#1a1a1a 0%,#2c2c2c 34%,#909090 40%,#5c5c5c 48%,#545454 70%,#686868 100%);border:0.500px solid #111"></div>
<div class="a" style="left:601.5px;top:308.8px;width:3px;height:4.5px;background:#c8c8c8;border-radius:1px"></div>
<div class="t" style="left:613.00px;top:306.55px;font-size:6.5px;line-height:6.5px;color:#fff;transform:scaleX(0.805);font-weight:bold;">Rosso</div>
<div class="t" style="left:664.00px;top:306.55px;font-size:6.5px;line-height:6.5px;color:#fff;transform:scaleX(0.885);">Ctrl+1</div>
<div class="a" style="left:580.5px;top:318.2px;width:11.5px;height:15.9px;background:#f1efe4;border-right:1px solid #8d8a7c;border-bottom:1.2px solid #c9c6b6"></div>
<svg class="a" style="left:582.500px;top:322.7px" width="8" height="6"><path d="M.5 2.800Q4 -.8 7.500 2.800Q4 5.500 .5 2.800Z" fill="#222"/><path d="M1.500 1.500Q4 -.5 6.500 1.500" stroke="#222" stroke-width="1" fill="none"/></svg>
<div class="a" style="left:592px;top:318.2px;width:93px;height:15.9px;background:#316ac5;border-bottom:1.300px solid #8fabe0"></div>
<div class="a" style="left:594.5px;top:320.5px;width:16.5px;height:11px;background:linear-gradient(#1a1a1a 0%,#2c2c2c 34%,#909090 40%,#5c5c5c 48%,#545454 70%,#686868 100%);border:0.500px solid #111"></div>
<div class="a" style="left:601.5px;top:324.7px;width:3px;height:4.5px;background:#c8c8c8;border-radius:1px"></div>
<div class="t" style="left:613.00px;top:322.45px;font-size:6.5px;line-height:6.5px;color:#fff;transform:scaleX(0.875);font-weight:bold;">Verde</div>
<div class="t" style="left:664.00px;top:322.45px;font-size:6.5px;line-height:6.5px;color:#fff;transform:scaleX(0.885);">Ctrl+2</div>
<div class="a" style="left:580.5px;top:334.1px;width:11.5px;height:15.9px;background:#f1efe4;border-right:1px solid #8d8a7c;border-bottom:1.2px solid #c9c6b6"></div>
<svg class="a" style="left:582.500px;top:338.6px" width="8" height="6"><path d="M.5 2.800Q4 -.8 7.500 2.800Q4 5.500 .5 2.800Z" fill="#222"/><path d="M1.500 1.500Q4 -.5 6.500 1.500" stroke="#222" stroke-width="1" fill="none"/></svg>
<div class="a" style="left:592px;top:334.1px;width:93px;height:15.9px;background:#316ac5;border-bottom:1.300px solid #8fabe0"></div>
<div class="a" style="left:594.5px;top:336.40000000000003px;width:16.5px;height:11px;background:linear-gradient(#1a1a1a 0%,#2c2c2c 34%,#909090 40%,#5c5c5c 48%,#545454 70%,#686868 100%);border:0.500px solid #111"></div>
<div class="a" style="left:601.5px;top:340.6px;width:3px;height:4.5px;background:#c8c8c8;border-radius:1px"></div>
<div class="t" style="left:613.00px;top:338.35px;font-size:6.5px;line-height:6.5px;color:#fff;transform:scaleX(0.812);font-weight:bold;">Blu</div>
<div class="t" style="left:664.00px;top:338.35px;font-size:6.5px;line-height:6.5px;color:#fff;transform:scaleX(0.885);">Ctrl+3</div>
<div class="a" style="left:685px;top:286.5px;width:8.5px;height:109.5px;background:#f8f7f2;border-left:1px solid #d8d5c8"></div>
<div class="t" style="left:686.30px;top:288.50px;font-size:6px;line-height:6px;color:#c8c5b8;">⌃</div>
<div class="t" style="left:686.30px;top:388.00px;font-size:6px;line-height:6px;color:#c8c5b8;">⌄</div>
<div class="a" style="left:580.5px;top:395.8px;width:113px;height:0.9px;background:#55534a;"></div>
<div class="a" style="left:580.5px;top:396.7px;width:113px;height:7.3px;background:#ece9d8;"></div>
<div class="a" style="left:626.5px;top:398px;width:4.5px;height:4.5px;border:0.8px solid #77756a;border-radius:3px"></div>
<div class="a" style="left:641.5px;top:397.8px;width:5.5px;height:5px;background:#c8c6b8;border:0.8px solid #77756a"></div>
<div class="a" style="left:656.5px;top:398.5px;width:4.5px;height:4.5px;background:#f4f3ea;border:0.8px solid #55534a"></div>
<div class="a" style="left:670.5px;top:398px;width:4.5px;height:5px;background:#d8d6c8;border:0.8px solid #77756a;border-radius:1px"></div>
<div class="a" style="left:684.5px;top:396.7px;width:0.8px;height:7.3px;background:#aaa798;"></div>
<div class="a" style="left:383.5px;top:41.3px;width:270.5px;height:211.7px;background:#efecdd;border:1.600px solid #0428d0;border-right-width:2.200px;border-bottom-width:2px;border-top:none;border-radius:3px 3px 0 0"></div>
<div class="a xb" style="left:383.500px;top:41.300px;width:270.500px;height:15.500px;border-radius:3px 3px 0 0"></div>
<div class="t" style="left:386.50px;top:45.30px;font-size:8px;line-height:8px;color:#fff;transform:scaleX(0.839);font-weight:bold;">Calcoli</div>
<div class="a" style="left:640.8px;top:44px;width:11px;height:11.5px;background:linear-gradient(135deg,#e8866a,#d8481e 50%,#c03a12);border:1px solid #f4e0d8;border-radius:2px"></div>
<svg class="a" style="left:640.800px;top:44px" width="11" height="11.500"><path d="M3 3.200L8 8.300M8 3.200L3 8.300" stroke="#fff" stroke-width="1.500"/></svg>
<div class="gb" style="left:391px;top:66.500px;width:195.500px;height:48.800px"></div>
<div class="gb" style="left:391px;top:126.500px;width:195.500px;height:47.200px"></div>
<div class="gb" style="left:391px;top:186.300px;width:195.500px;height:42.500px"></div>
<div class="a" style="left:393.5px;top:63px;width:38px;height:10px;background:#efecdd;"></div>
<div class="t" style="left:395.00px;top:64.80px;font-size:8px;line-height:8px;color:#000;transform:scaleX(0.870);">Sorgente 1:</div>
<div class="dd" style="left:433.7px;top:63px;width:125px;height:11.6px"><div class="ddb"></div></div>
<div class="t" style="left:436.70px;top:65.00px;font-size:8px;line-height:8px;color:#000;transform:scaleX(0.832);">Chi Dorme Non Prende Pesci.jpg</div>
<div class="t" style="left:411.50px;top:81.40px;font-size:8px;line-height:8px;color:#000;transform:scaleX(0.783);">Livello:</div>
<div class="dd" style="left:433.7px;top:79.4px;width:125px;height:11.6px"><div class="ddb"></div></div>
<div class="t" style="left:436.70px;top:81.40px;font-size:8px;line-height:8px;color:#000;transform:scaleX(0.848);">Sfondo</div>
<div class="t" style="left:410.00px;top:97.50px;font-size:8px;line-height:8px;color:#000;transform:scaleX(0.761);">Canale:</div>
<div class="dd" style="left:433.7px;top:95.6px;width:86.5px;height:11.6px"><div class="ddb"></div></div>
<div class="t" style="left:436.70px;top:97.60px;font-size:8px;line-height:8px;color:#000;transform:scaleX(0.794);">Rosso</div>
<div class="cb" style="left:528.500px;top:97.500px;width:7.200px;height:7.200px"></div>
<div class="t" style="left:537.30px;top:97.50px;font-size:8px;line-height:8px;color:#000;transform:scaleX(0.849);">Inverti</div>
<div class="a" style="left:393.5px;top:122px;width:38px;height:10px;background:#efecdd;"></div>
<div class="t" style="left:395.00px;top:123.80px;font-size:8px;line-height:8px;color:#000;transform:scaleX(0.870);">Sorgente 2:</div>
<div class="dd" style="left:433.7px;top:122px;width:125px;height:11.6px"><div class="ddb"></div></div>
<div class="t" style="left:436.70px;top:124.00px;font-size:8px;line-height:8px;color:#000;transform:scaleX(0.832);">Chi Dorme Non Prende Pesci.jpg</div>
<div class="t" style="left:411.50px;top:140.60px;font-size:8px;line-height:8px;color:#000;transform:scaleX(0.783);">Livello:</div>
<div class="dd" style="left:433.7px;top:138.6px;width:125px;height:11.6px"><div class="ddb"></div></div>
<div class="t" style="left:436.70px;top:140.60px;font-size:8px;line-height:8px;color:#000;transform:scaleX(0.848);">Sfondo</div>
<div class="t" style="left:410.00px;top:156.70px;font-size:8px;line-height:8px;color:#000;transform:scaleX(0.761);">Canale:</div>
<div class="dd" style="left:433.7px;top:154.8px;width:86.5px;height:11.6px"><div class="ddb"></div></div>
<div class="a" style="left:435.2px;top:156.3px;width:74.5px;height:8.6px;background:#316ac5;"></div>
<div class="t" style="left:436.70px;top:156.80px;font-size:8px;line-height:8px;color:#fff;transform:scaleX(0.861);">Verde</div>
<div class="cb" style="left:528.500px;top:156.700px;width:7.200px;height:7.200px"></div>
<div class="t" style="left:537.30px;top:156.70px;font-size:8px;line-height:8px;color:#000;transform:scaleX(0.849);">Inverti</div>
<div class="a" style="left:403px;top:181px;width:30px;height:10px;background:#efecdd;"></div>
<div class="t" style="left:406.50px;top:182.80px;font-size:8px;line-height:8px;color:#000;transform:scaleX(0.798);">Fusione:</div>
<div class="dd" style="left:433.7px;top:181px;width:64px;height:11.6px"><div class="ddb"></div></div>
<div class="t" style="left:436.70px;top:183.00px;font-size:8px;line-height:8px;color:#000;transform:scaleX(0.810);">Moltiplica</div>
<div class="a" style="left:497.7px;top:183px;width:3px;height:7px;background:#efecdd;"></div>
<div class="t" style="left:406.50px;top:199.00px;font-size:8px;line-height:8px;color:#000;transform:scaleX(0.822);">Opacità:</div>
<div class="dd" style="left:433.700px;top:197px;width:23.500px;height:11.600px"></div>
<div class="t" style="left:437.00px;top:199.00px;font-size:8px;line-height:8px;color:#000;transform:scaleX(0.824);">100</div>
<div class="t" style="left:459.00px;top:199.00px;font-size:8px;line-height:8px;color:#000;transform:scaleX(0.843);">%</div>
<div class="cb" style="left:404.800px;top:214.200px;width:7.200px;height:7.200px"></div>
<div class="t" style="left:413.30px;top:214.00px;font-size:8px;line-height:8px;color:#000;transform:scaleX(0.813);">Maschera...</div>
<div class="t" style="left:390.00px;top:237.30px;font-size:8px;line-height:8px;color:#000;transform:scaleX(0.803);">Risultato:</div>
<div class="dd" style="left:419.4px;top:235.3px;width:70.6px;height:11.6px"><div class="ddb"></div></div>
<div class="t" style="left:422.40px;top:237.30px;font-size:8px;line-height:8px;color:#000;transform:scaleX(0.828);">Nuovo canale</div>
<div class="btn" style="left:597px;top:63px;width:50px;height:9.800px;box-shadow:inset 0 0 0 1px #9dbaea"></div>
<div class="t" style="left:616.50px;top:64.20px;font-size:8px;line-height:8px;color:#000;transform:scaleX(0.865);">OK</div>
<div class="btn" style="left:597px;top:78px;width:50px;height:9.800px"></div>
<div class="t" style="left:611.00px;top:79.20px;font-size:8px;line-height:8px;color:#000;transform:scaleX(0.805);">Annulla</div>
<div class="cb" style="left:596.700px;top:97.300px;width:7px;height:7px"></div>
<svg class="a" style="left:596.700px;top:97.300px" width="7" height="7"><path d="M1.600 3.400L3 5L5.500 1.800" stroke="#21a121" stroke-width="1.200" fill="none"/></svg>
<div class="t" style="left:605.30px;top:97.00px;font-size:8px;line-height:8px;color:#000;transform:scaleX(0.836);">Anteprima</div>
<div class="a" style="left:0px;top:411px;width:700px;height:11.2px;background:#ece9d8;border-top:1px solid #fbfaf4"></div>
<div class="a" style="left:1px;top:413px;width:24.5px;height:8.3px;background:#f5f4ec;border:1px solid #b4b1a2;border-right-color:#fff;border-bottom-color:#fff"></div>
<div class="t" style="left:6.00px;top:414.30px;font-size:6px;line-height:6px;color:#aaa798;transform:scaleX(0.847);">100%</div>
<div class="a" style="left:26.5px;top:413px;width:114px;height:8.3px;background:#efede0;border:1px solid #d4d1c2;border-right-color:#fff;border-bottom-color:#fff"></div>
<div class="t" style="left:28.50px;top:414.05px;font-size:6.5px;line-height:6.5px;color:#111;transform:scaleX(0.816);">Doc: 907,7 KB/907,7 KB</div>
<div class="a" style="left:131.5px;top:413.2px;width:0px;height:0px;border-top:3px solid transparent;border-bottom:3px solid transparent;border-left:4px solid #111"></div>
<div class="a" style="left:0px;top:422px;width:700px;height:16px;background:linear-gradient(#3a86f2 0%,#2a6fe6 12%,#245ddb 45%,#2258d4 80%,#1a47b8 100%)"></div>
<div class="a" style="left:0px;top:422px;width:52px;height:16px;background:linear-gradient(#5eb25a 0%,#3f9a3c 18%,#36902f 55%,#2d7e28 100%);border-radius:0 7px 7px 0;box-shadow:inset -2px 0 2px rgba(0,40,0,.35)"></div>
<svg class="a" style="left:5.500px;top:424.500px" width="11" height="11" viewBox="0 0 11 11">
<path d="M1.200 2.200Q3 1.200 5 2.200L4.300 5Q2.500 4.200 .6 5Z" fill="#e8542a"/>
<path d="M5.700 2.500Q7.500 3.300 9.600 2.300L8.900 5.200Q7 6 5 5.200Z" fill="#7cc142"/>
<path d="M.5 5.800Q2.300 4.900 4.200 5.800L3.500 8.700Q1.700 7.800 0 8.700Z" fill="#3a8ee8"/>
<path d="M4.900 6Q6.800 6.900 8.700 6L8 8.900Q6.200 9.700 4.200 8.900Z" fill="#f7c52a"/>
</svg>
<div class="t" style="left:19.00px;top:425.45px;font-size:9.5px;line-height:9.5px;color:#fff;transform:scaleX(0.996);font-weight:bold;font-style:italic;text-shadow:0.500px 0.500px 1px rgba(0,0,0,.5)">start</div>
<svg class="a" style="left:59.0px;top:425.2px" width="9.6" height="9.6" viewBox="0 0 10 10"><circle cx="5" cy="5" r="4.600" fill="#e8741c"/><circle cx="5.200" cy="4.600" r="2.700" fill="#3a5fb8"/><path d="M1 4Q2 1 5 .8Q3.500 2.500 4 4.500Q4.500 6.500 7 6Q5.500 8.500 3 7.500Q1 6.500 1 4Z" fill="#f09a2a"/></svg>
<div class="a" style="left:74.3px;top:423.5px;width:85.7px;height:14px;background:linear-gradient(#5a9cf6 0%,#3f85f0 18%,#3a7dea 60%,#3474e0 100%);border-radius:2px;"></div>
<svg class="a" style="left:79.2px;top:425.7px" width="9.2" height="9.2" viewBox="0 0 10 10"><circle cx="5" cy="5" r="4.600" fill="#e8741c"/><circle cx="5.200" cy="4.600" r="2.700" fill="#3a5fb8"/><path d="M1 4Q2 1 5 .8Q3.500 2.500 4 4.500Q4.500 6.500 7 6Q5.500 8.500 3 7.500Q1 6.500 1 4Z" fill="#f09a2a"/></svg>
<div class="t" style="left:89.30px;top:427.15px;font-size:6.5px;line-height:6.5px;color:#fff;transform:scaleX(0.975);">photo4u.it - forum fo...</div>
<div class="a" style="left:162.5px;top:423.5px;width:85.5px;height:14px;background:linear-gradient(#5a9cf6 0%,#3f85f0 18%,#3a7dea 60%,#3474e0 100%);border-radius:2px;"></div>
<svg class="a" style="left:167.4px;top:425.7px" width="9.2" height="9.2" viewBox="0 0 10 10"><circle cx="5" cy="5" r="4.600" fill="#e8741c"/><circle cx="5.200" cy="4.600" r="2.700" fill="#3a5fb8"/><path d="M1 4Q2 1 5 .8Q3.500 2.500 4 4.500Q4.500 6.500 7 6Q5.500 8.500 3 7.500Q1 6.500 1 4Z" fill="#f09a2a"/></svg>
<div class="t" style="left:177.50px;top:427.15px;font-size:6.5px;line-height:6.5px;color:#fff;transform:scaleX(0.948);">Hardware Upgrade F...</div>
<div class="a" style="left:250px;top:423.5px;width:85.5px;height:14px;background:linear-gradient(#5a9cf6 0%,#3f85f0 18%,#3a7dea 60%,#3474e0 100%);border-radius:2px;"></div>
<svg class="a" style="left:254.9px;top:425.7px" width="9.2" height="9.2" viewBox="0 0 10 10"><circle cx="5" cy="5" r="4.600" fill="#e8741c"/><circle cx="5.200" cy="4.600" r="2.700" fill="#3a5fb8"/><path d="M1 4Q2 1 5 .8Q3.500 2.500 4 4.500Q4.500 6.500 7 6Q5.500 8.500 3 7.500Q1 6.500 1 4Z" fill="#f09a2a"/></svg>
<div class="t" style="left:265.00px;top:427.15px;font-size:6.5px;line-height:6.5px;color:#fff;transform:scaleX(0.975);">photo4u.it - forum fo...</div>
<div class="a" style="left:337.5px;top:423.5px;width:86.5px;height:14px;background:linear-gradient(#1c4fb0 0%,#1e52b8 50%,#2058c0 100%);border-radius:2px;box-shadow:inset 0 1px 1px rgba(0,0,30,.5);"></div>
<div class="a" style="left:342.5px;top:426.5px;width:7.5px;height:7.5px;background:#f4f2dc;border-radius:1px"></div>
<div class="a" style="left:344.0px;top:428.5px;width:4.5px;height:4.5px;background:#c9a62a;"></div>
<div class="t" style="left:352.50px;top:427.15px;font-size:6.5px;line-height:6.5px;color:#fff;transform:scaleX(0.890);">Adobe Photoshop</div>
<div class="t" style="left:529.00px;top:427.25px;font-size:6.5px;line-height:6.5px;color:#fff;transform:scaleX(0.952);">IT</div>
<div class="t" style="left:545.00px;top:427.25px;font-size:6.5px;line-height:6.5px;color:#8fb4f4;transform:scaleX(0.857);">Collegamenti</div>
<div class="a" style="left:582.5px;top:425.5px;width:7.5px;height:9px;background:#e8eef8;border-radius:1px;border:0.500px solid #9ab"></div>
<div class="a" style="left:584px;top:428px;width:5px;height:5px;background:#3a8ad8;border-radius:2.500px"></div>
<div class="t" style="left:593.50px;top:427.25px;font-size:6.5px;line-height:6.5px;color:#fff;transform:scaleX(0.791);">Nuov</div>
<div class="t" style="left:609.50px;top:425.50px;font-size:6px;line-height:6px;color:#cfe0ff;transform:scaleX(1.199);">»</div>
<div class="t" style="left:620.00px;top:427.25px;font-size:6.5px;line-height:6.5px;color:#8fb4f4;transform:scaleX(0.888);">Indirizzo</div>
<div class="a" style="left:649px;top:422px;width:51px;height:16px;background:linear-gradient(#3fb0f6 0%,#1e9aee 15%,#1590e8 60%,#1280d4 100%);border-left:1px solid #0d62b8"></div>
<div class="a" style="left:645px;top:425.3px;width:8.5px;height:8.5px;background:#4aa4f4;border-radius:4.300px;border:0.700px solid #cfe4fb"></div>
<div class="t" style="left:647.30px;top:425.45px;font-size:7.5px;line-height:7.5px;color:#fff;transform:scaleX(1.282);font-weight:bold;">‹</div>
<div class="a" style="left:657px;top:426.5px;width:6px;height:6px;background:#3a2a6a;border-radius:1px"></div>
<div class="a" style="left:659.5px;top:425.5px;width:4px;height:4px;background:#d8dcec;"></div>
<div class="a" style="left:665px;top:426px;width:7px;height:6.5px;background:#8a8a7a;border:1px solid #444"></div>
<div class="a" style="left:666.5px;top:432.5px;width:4px;height:1.5px;background:#555;"></div>
<div class="t" style="left:677.50px;top:427.25px;font-size:6.5px;line-height:6.5px;color:#fff;transform:scaleX(0.922);">12.37</div>
<div class="a" style="left:19.6px;top:80.8px;width:1.8px;height:1.8px;background:#111;"></div>
<div class="a" style="left:19.6px;top:93.1px;width:1.8px;height:1.8px;background:#111;"></div>
<div class="a" style="left:33.1px;top:104.6px;width:1.8px;height:1.8px;background:#111;"></div>
<div class="a" style="left:19.1px;top:119.1px;width:1.8px;height:1.8px;background:#111;"></div>
<div class="a" style="left:33.1px;top:119.1px;width:1.8px;height:1.8px;background:#111;"></div>
<div class="a" style="left:19.1px;top:131.6px;width:1.8px;height:1.8px;background:#111;"></div>
<div class="a" style="left:33.1px;top:131.6px;width:1.8px;height:1.8px;background:#111;"></div>
<div class="a" style="left:19.1px;top:144.1px;width:1.8px;height:1.8px;background:#111;"></div>
<div class="a" style="left:33.1px;top:144.1px;width:1.8px;height:1.8px;background:#111;"></div>
<div class="a" style="left:19.1px;top:156.1px;width:1.8px;height:1.8px;background:#111;"></div>
<div class="a" style="left:33.1px;top:156.1px;width:1.8px;height:1.8px;background:#111;"></div>
<div class="a" style="left:19.1px;top:170.6px;width:1.8px;height:1.8px;background:#111;"></div>
<div class="a" style="left:33.6px;top:170.6px;width:1.8px;height:1.8px;background:#111;"></div>
<div class="a" style="left:19.1px;top:183.1px;width:1.8px;height:1.8px;background:#111;"></div>
<div class="a" style="left:33.6px;top:183.1px;width:1.8px;height:1.8px;background:#111;"></div>
<div class="a" style="left:19.1px;top:197.1px;width:1.8px;height:1.8px;background:#111;"></div>
<div class="a" style="left:33.6px;top:197.1px;width:1.8px;height:1.8px;background:#111;"></div>
<svg class="a" style="left:4px;top:70px" width="36" height="150" viewBox="4 70 36 150">
<g fill="none" stroke="#333" stroke-width=".9">
<rect x="10.800" y="74" width="7.600" height="7.200" stroke-dasharray="1.400 1"/>
<path d="M24.300 74L24.300 79.500L26 78L27.500 80.800L28.500 80.200L27 77.600L29.300 77.300Z" fill="#222" stroke="none"/>
<path d="M29 78.500H33.500M31.200 76.300V80.800" stroke-width="1"/>
<path d="M10.800 85.500L13 88.500L14.500 87L16 88.500L18.300 85.500L17.500 91L14 92.500L12.500 91.500L11.500 93" stroke-width="1"/>
<path d="M26 87.200L32 92.500" stroke-width="1.300"/><path d="M25 86L26.500 87.500M27.500 85.500L27 87M25 88.500L26 88" stroke-width=".6"/>
<path d="M12.500 97.500V103.500H18.500M11 99.500H16.500V105" stroke-width="1.200"/>
<path d="M24.200 104.800Q29 103 33 98.200L31.500 101.500Q28 104.500 24.200 104.800Z" fill="#555"/>
<path d="M10 119.500L18 112.500Q19.800 112 19.500 114L11.500 121Q9.800 121.300 10 119.500Z" fill="#aaa" stroke="#444" stroke-width=".8"/>
<path d="M25.500 119.800Q26 117.500 28 117L33 112.500L33.800 113.500L29 118.200Q28 120 25.500 119.800Z" fill="#555" stroke="#333" stroke-width=".6"/>
<path d="M13.200 124.500Q14.500 123.500 15.800 124.500V127.500L18 129V131.800H10.500V129L13.200 127.500Z" fill="#666" stroke="#333" stroke-width=".7"/>
<path d="M25.500 131.500Q26.500 129.500 28.500 128.500L33 124.500L33.500 125.500L29.500 129.800Q28 131.500 25.500 131.500Z" fill="#555" stroke="#333" stroke-width=".6"/><path d="M26 126Q27 123.500 30 124.500" stroke-width=".9"/>
<path d="M10.200 141.500L14 137.800H19.300L15.500 141.500ZM10.200 141.500V143.500H15.500V141.500M15.500 143.500L19.300 139.800V137.800" fill="#ddd" stroke="#333" stroke-width=".7"/>
<path d="M24 140L27.500 136.500L31 140L27.500 144Z" fill="#eee" stroke="#333" stroke-width=".8"/><path d="M30.500 138.500Q33 139.500 32.500 143.500Q31 142 30.500 138.500Z" fill="#222" stroke="none"/>
<path d="M14.600 148Q18.500 153 17.600 155.500Q16.600 157.500 14.600 157.500Q12.500 157.500 11.600 155.500Q10.800 153 14.600 148Z" fill="#ccc" stroke="#444" stroke-width=".8"/>
<ellipse cx="28.300" cy="153" rx="4.600" ry="3.700" fill="#bbb" stroke="#444" stroke-width=".8"/><path d="M25.500 152.500Q28 150.500 31 152.500M26 154.500Q28.500 153.500 30.500 154.500" stroke-width=".6" stroke="#666"/>
<path d="M12.300 163.300V170.300L14 168.800L15.200 171.300L16.300 170.800L15.200 168.300L17 168Z" fill="#111" stroke="none"/>
<path d="M26 163.500H32.500V165.500H31.800L31.500 164.600H30.200V169.800L31 170.300V170.800H27.500V170.300L28.300 169.800V164.600H27L26.700 165.500H26Z" fill="#222" stroke="#222" stroke-width=".4"/>
<path d="M14.300 174.800L16.800 179Q16.800 181.500 14.300 183Q11.800 181.500 11.800 179Z" fill="#777" stroke="#222" stroke-width=".8"/><circle cx="14.300" cy="179.500" r=".8" fill="#fff" stroke="none"/>
<rect x="25.500" y="176.800" width="6.800" height="5.500" fill="#aaa" stroke="#333" stroke-width=".8"/>
<path d="M11.500 191.300H18.300V195.500L16 197.800H11.500Z" fill="#ddd" stroke="#444" stroke-width=".8"/><path d="M13 193.300H16.800M13 195H15.500" stroke-width=".5" stroke="#777"/>
<path d="M25.300 198.300L26 196.300L30 192.300L31.300 193.600L27.300 197.600Z" fill="#888" stroke="#333" stroke-width=".6"/><path d="M30 191L32.500 193.500" stroke-width="1.600" stroke="#222"/><path d="M31 191.500L32.800 189.800" stroke-width="1.300" stroke="#222"/>
<rect x="8.800" y="201.800" width="12.300" height="9.300" fill="#fdfdfd" stroke="#8a94a8" stroke-width=".7"/>
<path d="M12.400 207.200C11.600 205.800 12.300 205.300 13.100 206.300V204.400c0-.8 1-.8 1.100 0V203.800c.2-.8 1.200-.7 1.200.1V204.300c.2-.7 1.200-.6 1.200.2v.7c.3-.6 1.200-.5 1.100.3C17.600 207.400 17.900 208.700 17 210.200H13.800C13.400 209.200 12.900 208.100 12.400 207.200Z" fill="#fdfdfd" stroke="#555" stroke-width=".6"/>
<circle cx="27.300" cy="204.600" r="2.700" fill="#e8e8e8" stroke="#333" stroke-width=".9"/><path d="M29.300 206.600L32.600 210.200" stroke-width="1.500" stroke="#222"/>
</g></svg>
<div class="a" style="left:17.5px;top:225.5px;width:15.5px;height:13.5px;background:#fdfdfd;border:1px solid #333"></div>
<div class="a" style="left:9.5px;top:218.3px;width:16px;height:13.5px;background:#050505;border:0.600px solid #ece9d8;outline:0.700px solid #333"></div>
<div class="a" style="left:9.5px;top:235.5px;width:3.6px;height:3.6px;background:#fff;border:0.700px solid #222"></div>
<div class="a" style="left:8.5px;top:234.3px;width:3.6px;height:3.6px;background:#000;"></div>
<svg class="a" style="left:26px;top:217px" width="7" height="7"><path d="M1.500 1.500Q4.500 1 5.500 5M1.500 1.500L3 .5M1.500 1.500L2.800 3M5.500 5L4.300 4M5.500 5L6.300 3.800" stroke="#333" stroke-width=".6" fill="none"/></svg>
<div class="a" style="left:9.5px;top:247.2px;width:11px;height:9.5px;background:#fafaf6;border:1px solid #6a7a98"></div>
<div class="a" style="left:11.5px;top:249px;width:7px;height:6px;background:#ddd;border:0.800px solid #333"></div>
<div class="a" style="left:13px;top:250.3px;width:4px;height:3.4px;background:#fff;border:0.600px solid #555;border-radius:2px"></div>
<div class="a" style="left:23px;top:248px;width:10.5px;height:8.5px;background:#8a8a8a;border:0.800px solid #333"></div>
<div class="a" style="left:25.2px;top:249.8px;width:6px;height:5px;background:#f4f4f4;border-radius:2.500px"></div>
<div class="a" style="left:9.5px;top:262.3px;width:7.5px;height:7.5px;background:#9a9a96;border:1px solid #667;box-shadow:inset 0 2px 0 #667"></div>
<div class="a" style="left:18.8px;top:263px;width:6.5px;height:6.5px;background:#a4a4a0;border:0.800px solid #666;box-shadow:inset 0 1.500px 0 #777"></div>
<div class="a" style="left:27.3px;top:263px;width:6.5px;height:6.5px;background:#8c8c88;border:0.800px solid #555"></div>
<svg class="a" style="left:9px;top:275px" width="26" height="10" viewBox="9 275 26 10"><rect x="10.500" y="277.500" width="7.500" height="6" fill="#f4f4f4" stroke="#222" stroke-width=".9"/><path d="M13 276.800H19V278.300H22.500L19.500 281.500L22.500 281.500" stroke="#222" stroke-width="1" fill="none"/><path d="M17 279.800H21.500V278L24.500 280.500L21.500 283V281.300H17Z" fill="#222"/><rect x="25.500" y="277" width="6.500" height="7" fill="#ddd" stroke="#333" stroke-width=".8"/><path d="M26.800 280L28.500 282.500L32.800 276.300" stroke="#222" stroke-width="1.200" fill="none"/></svg>
</div></body></html>
